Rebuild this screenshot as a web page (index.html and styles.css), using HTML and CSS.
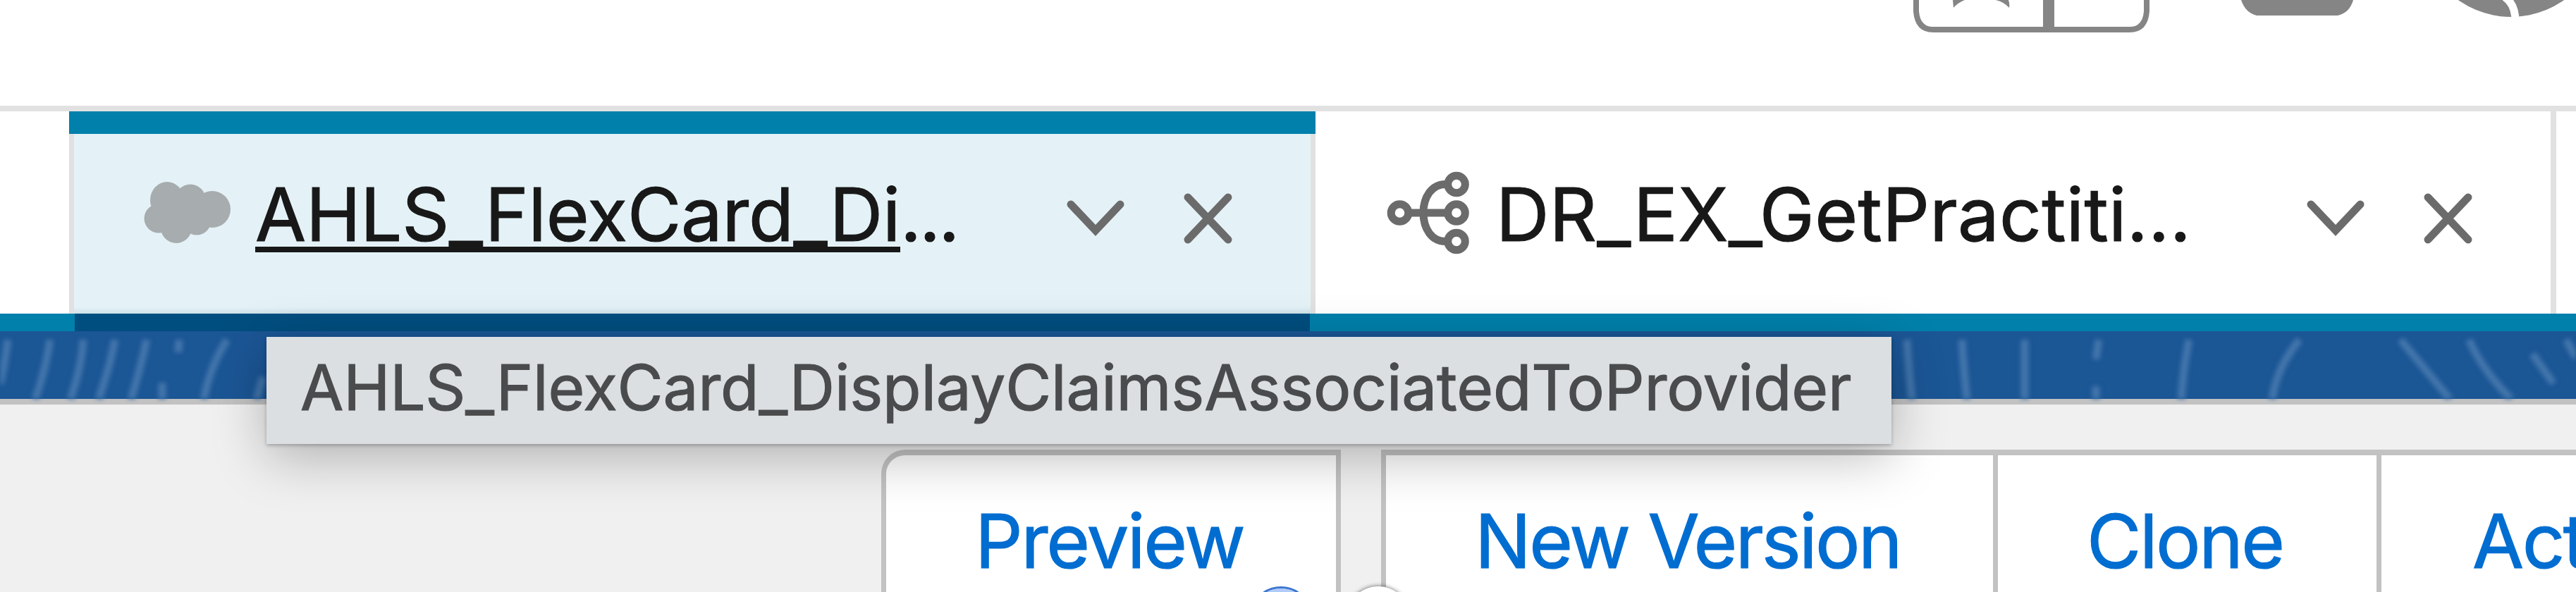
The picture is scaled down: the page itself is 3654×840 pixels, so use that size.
FILE: index.html
```html
<!DOCTYPE html>
<html lang="en">
<head>
<meta charset="utf-8">
<title>FlexCard Designer</title>
<link rel="stylesheet" href="styles.css">
</head>
<body>
<header class="global-header">
  <svg class="header-icons" viewBox="2700 0 954 50" fill="#858585">
    <path d="M2718-20V16Q2720 42 2742 42H3021Q3043 42 3045 16V-20" fill="none" stroke="#858585" stroke-width="8"/>
    <path d="M2898 0h16v42h-16zM2770 0h17q-10 4-16 11zM2831 0h18q2 6 1 11-7-8-19-11z"/>
    <path d="M3179 0Q3185 18 3201 22H3316Q3333 18 3338 0z"/>
    <circle cx="3562" cy="-106" r="130"/>
    <path d="M3553-4Q3568 6 3568 30" fill="none" stroke="#fff" stroke-width="11"/>
  </svg>
</header>
<nav class="tab-bar">
  <div class="tab-stub"></div>
  <div class="tab tab-active">
    <svg class="cloud" viewBox="204 257 124 90" fill="#a7acaf">
      <ellipse cx="237" cy="284" rx="24" ry="26"/><ellipse cx="270" cy="284" rx="22" ry="22.500"/><circle cx="301" cy="297" r="26"/>
      <circle cx="225" cy="310" r="20.5"/><circle cx="250" cy="323" r="22"/><circle cx="279" cy="313" r="20.5"/>
      <path d="M225 285h70v30h-60z"/>
    </svg>
    <span class="tab-label"><span class="underlined">AHLS_FlexCard_Di</span><span class="ellipsis">...</span></span>
    <svg class="tab-actions" viewBox="1510 270 242 80">
      <path d="M1519 290l35 37 35-37M1685 280l57 60M1742 280l-57 60"/>
    </svg>
  </div>
  <div class="tab tab-second">
    <svg class="nodes" viewBox="1966 242 120 120">
      <circle cx="1985.5" cy="302" r="12.3"/><circle cx="2066" cy="261.5" r="12.3"/><circle cx="2066" cy="302" r="12.3"/><circle cx="2066" cy="342.5" r="12.3"/>
      <path d="M1998 302h56M2053 261.5C2030 260 2019 281 2019 302s11 42 34 40.500"/>
    </svg>
    <span class="tab-label label-second">DR_EX_GetPractiti...</span>
    <svg class="tab-actions" viewBox="1510 270 242 80">
      <path d="M1519 290l35 37 35-37M1685 280l57 60M1742 280l-57 60"/>
    </svg>
  </div>
</nav>
<div class="tab-underline"><div class="tab-underline-active"></div></div>
<div class="brand-band">
  <svg class="pattern" viewBox="0 470 3654 96">
    <path d="M11 482Q8 510 0 545M71 482Q66 520 50 566M118 482Q116 520 100 566M163 482Q156 520 140 566M208 482Q200 520 186 566M254 482l-1 18M230 543v23M322 482Q298 520 289 566M373 535l-9 31M2705 482q2 40 7 84M2783 482q2 40 7 84M2872 482v84M2977 482l-4 28M2973 548v18M3105 482q-8 40-11 84M3262 482Q3230 520 3223 566M3405 482l70 84M3502 482q20 45 60 84M3592 502l30 42M3640 482l14 26"/>
  </svg>
</div>
<main class="content">
  <div class="button preview">Preview</div>
  <div class="button-group">
    <div class="button new-version">New Version</div>
    <div class="button clone">Clone</div>
    <div class="button activate">Act</div>
  </div>
</main>
<div class="tooltip"><span class="tooltip-text">AHLS_FlexCard_DisplayClaimsAssociatedToProvider</span></div>
<div class="handles">
  <div class="handle handle-blue"></div>
  <div class="handle handle-white"></div>
</div>
</body>
</html>
```
FILE: styles.css
```css
* { box-sizing: border-box; }
html { overflow: hidden; }
body {
  margin: 0;
  width: 3654px;
  height: 840px;
  overflow: hidden;
  position: relative;
  background: #f0f0f0;
  font-family: Inter, "Liberation Sans", sans-serif;
  -webkit-text-stroke: 1.2px currentColor;
}
svg { display: block; flex: none; }
.global-header {
  height: 158px;
  display: flex;
  justify-content: flex-end;
  background: #fff;
  border-bottom: 8px solid #e1e1e1;
}
.header-icons { width: 954px; height: 50px; }
.tab-bar { display: flex; height: 287px; background: #fff; }
.tab-stub { width: 98px; }
.tab {
  display: flex;
  align-items: flex-start;
  white-space: nowrap;
}
.tab-active {
  width: 1768px;
  border-top: 32px solid #0080ab;
  background:
    linear-gradient(#e1e1e1, #e1e1e1) left / 7px 100% no-repeat,
    linear-gradient(#e1e1e1, #e1e1e1) right / 7px 100% no-repeat,
    linear-gradient(to bottom, transparent 246px, #cde1e8 255px),
    #e4f2f7;
  padding-left: 106px;
}
.tab-second {
  width: 1760px;
  border-right: 8px solid #e1e1e1;
  padding: 32px 0 0 100px;
}
.cloud { width: 124px; height: 90px; margin-top: 67px; }
.nodes { width: 120px; height: 120px; margin-top: 52px; fill: none; stroke: #6b6b6b; stroke-width: 11; }
.tab-label {
  width: 1148px;
  margin: 49px 0 0 34px;
  font-size: 104.500px;
  line-height: 130px;
  letter-spacing: -0.2px;
  color: #181818;
}
.label-second { margin-left: 36px; width: 1147px; letter-spacing: 0.4px; }
.underlined {
  text-decoration: underline;
  text-decoration-thickness: 8px;
  text-underline-offset: 8px;
  text-decoration-skip-ink: none;
}
.ellipsis { letter-spacing: -3px; }
.tab-actions { width: 242px; height: 80px; margin-top: 80px; fill: none; stroke: #6b6b6b; stroke-width: 11; stroke-linecap: round; }
.tab-underline { height: 25px; background: #0080ab; padding-left: 106px; }
.tab-underline-active { width: 1752px; height: 25px; background: #004e7f; }
.brand-band { height: 104px; background: #1b5695; border-bottom: 8px solid #c2c2c2; }
.pattern { width: 3654px; height: 96px; fill: none; stroke: #4275ab; stroke-width: 11; filter: blur(3px); }
.content { display: flex; height: 266px; padding: 64px 0 0 1250px; overflow: hidden; }
.button {
  height: 202px;
  flex: none;
  border: 8px solid #c2c2c2;
  border-bottom: 0;
  border-right-width: 7px;
  border-left-width: 7px;
  background: #fff;
  color: #016dd1;
  font-size: 106px;
  line-height: 130px;
  padding-top: 57px;
  white-space: nowrap;
}
.preview { width: 652px; border-top-left-radius: 34px; padding-left: 126px; letter-spacing: -2.300px; }
.button-group { display: flex; flex: none; width: 1695px; margin-left: 57px; }
.new-version { width: 875px; padding-left: 126px; letter-spacing: -2.700px; }
.clone { width: 544px; border-left: 0; padding-left: 126px; letter-spacing: -2.500px; }
.activate { width: 276px; border-left: 0; border-right: 0; padding-left: 129px; letter-spacing: -2.500px; }
.tooltip {
  position: absolute;
  left: 378px;
  top: 478px;
  width: 2305px;
  height: 152px;
  padding: 7px 0 0 48px;
  background: #dbdfe2;
  color: #4a4b4c;
  white-space: nowrap;
  box-shadow: 0 2px 5px rgba(0, 0, 0, .25), 0 18px 76px rgba(0, 0, 0, .27);
}
.tooltip-text { font-size: 89px; line-height: 130px; letter-spacing: -0.17px; }
.handles { position: absolute; left: 1760px; top: 820px; width: 260px; height: 20px; overflow: hidden; display: flex; gap: 48px; padding: 12px 0 0 12px; }
.handle { flex: none; width: 90px; height: 90px; border-radius: 50%; background: #fff; }
.handle-blue { border: 3px solid #3b76d0; box-shadow: inset 0 0 0 5px #aecbfa; }
.handle-white { box-shadow: 0 0 6px rgba(0, 0, 0, .6); }
```
